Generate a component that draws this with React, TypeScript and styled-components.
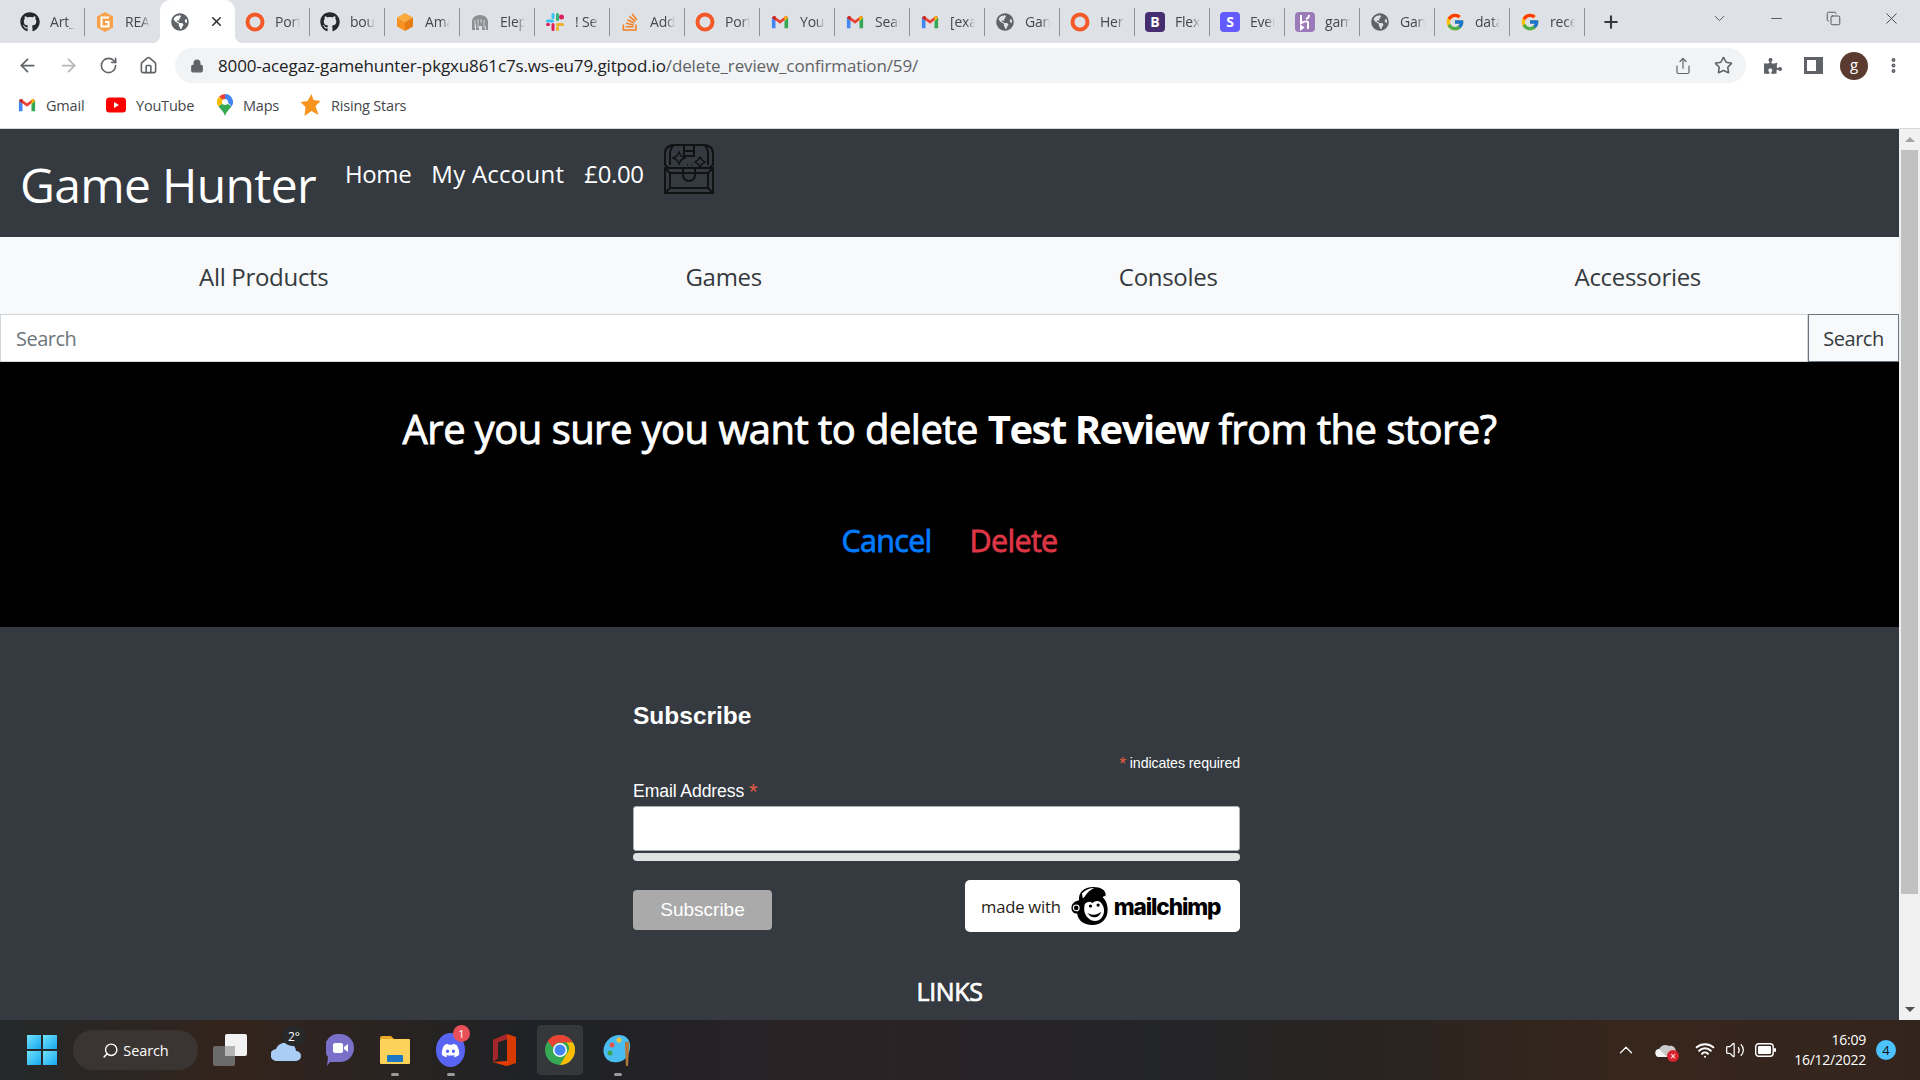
import React from "react";
import styled, { createGlobalStyle } from "styled-components";
import { FaGithub, FaGlobeAmericas, FaDiscord, FaStackOverflow, FaPuzzlePiece } from "react-icons/fa";
import { FcGoogle } from "react-icons/fc";
import { ArrowLeft, ArrowRight, RotateCw, Home, Lock, Star, Share, ChevronDown, Minus, X, Plus, Copy, MoreVertical, ChevronUp, Search as SearchIcon, Wifi, Volume2 } from "lucide-react";

const sans = `"Open Sans", "Noto Sans", "Liberation Sans", sans-serif`;

const Global = createGlobalStyle`
  html, body { margin: 0; padding: 0; width: 1920px; height: 1080px; overflow: hidden; background: #fff; }
  #root { width: 1920px; height: 1080px; }
  * { box-sizing: border-box; }
`;

const Screen = styled.div`
  width: 1920px; height: 1080px; display: flex; flex-direction: column; overflow: hidden; font-family: ${sans};
`;

/* ---------- browser chrome ---------- */
const TabStrip = styled.div`
  height: 43px; flex: none; background: #dee1e6; display: flex; align-items: center; padding-left: 10px; color: #3c4043;
`;
const Tab = styled.div<{ $active?: boolean; $noSep?: boolean }>`
  width: 75px; height: ${p => (p.$active ? "43px" : "28px")}; display: flex; align-items: center; gap: 10px; padding-left: 10px; flex: none; position: relative;
  background: ${p => (p.$active ? "#fff" : "transparent")};
  border-radius: ${p => (p.$active ? "10px 10px 0 0" : "0")};
  border-right: ${p => (p.$active || p.$noSep ? "0" : "1px solid #8f9196")};
  ${p => p.$active && `
    &::before, &::after { content: ""; position: absolute; bottom: 0; width: 8px; height: 8px; }
    &::before { left: -8px; background: radial-gradient(circle at 0 0, transparent 8px, #fff 8.5px); }
    &::after { right: -8px; background: radial-gradient(circle at 100% 0, transparent 8px, #fff 8.5px); }
  `}
`;
const TabIcon = styled.span`
  width: 20px; height: 20px; flex: none; display: flex; align-items: center; justify-content: center;
`;
const TabLabel = styled.span`
  width: 25px; overflow: hidden; white-space: nowrap; font-size: 14px; letter-spacing: -0.2px; color: #45474a;
  mask-image: linear-gradient(90deg, #000 65%, transparent);
  -webkit-mask-image: linear-gradient(90deg, #000 65%, transparent);
`;
const CloseMark = styled.span`
  margin-left: 9px; display: flex; color: #303236;
`;
const NewTab = styled.span`
  margin-left: 16px; display: flex; color: #36393d;
`;
const WindowControls = styled.div`
  margin-left: auto; display: flex; align-items: center; color: #45474a; padding-bottom: 6px;
`;
const WinButton = styled.span<{ $w: number }>`
  width: ${p => p.$w}px; display: flex; justify-content: center;
`;
const Toolbar = styled.div`
  height: 43px; flex: none; background: #fff; display: flex; align-items: center; padding: 2px 0 0 17px; color: #5f6368;
`;
const NavIcon = styled.span<{ $w: number; $dim?: boolean }>`
  width: ${p => p.$w}px; flex: none; display: flex; color: ${p => (p.$dim ? "#b5b7ba" : "#5f6368")};
`;
const Omnibox = styled.div`
  width: 1571px; height: 35px; border-radius: 18px; background: #f1f3f4; display: flex; align-items: center; padding: 0 13px 0 15px; flex: none;
`;
const Url = styled.span`
  margin-left: 14px; font-size: 17px; letter-spacing: -0.13px; color: #202124; white-space: nowrap;
`;
const UrlPath = styled.span`
  color: #5f6368;
`;
const OmniEnd = styled.span`
  margin-left: auto; display: flex; gap: 22px; align-items: center; color: #5f6368;
`;
const ToolbarRight = styled.div`
  display: flex; align-items: center; margin-left: 18px; gap: 19px; color: #5f6368;
`;
const PanelIcon = styled.span`
  width: 19px; height: 17px; margin: 0 -2px 0 3px; border: 3px solid #5f6368; border-right-width: 7px; display: block;
`;
const Avatar = styled.span`
  width: 28px; height: 28px; margin-right: -3px; border-radius: 50%; background: #5b3a30; color: #fff; font-size: 15px; display: flex; align-items: center; justify-content: center; line-height: 1; padding-bottom: 3px;
`;
const Bookmarks = styled.div`
  height: 43px; flex: none; background: #fff; display: flex; align-items: center; padding: 0 0 4px 18px; font-size: 14.5px; letter-spacing: -0.2px; color: #45474a; border-bottom: 1px solid #d5d7da;
`;
const Bookmark = styled.span<{ $w: number }>`
  width: ${p => p.$w}px; flex: none; display: flex; align-items: center; gap: 10px;
`;

/* ---------- page ---------- */
const Viewport = styled.div`
  flex: 1; min-height: 0; display: flex;
`;
const Page = styled.div`
  flex: 1; min-width: 0; overflow: hidden; display: flex; flex-direction: column;
`;
const Scrollbar = styled.div`
  width: 21px; flex: none; background: #f1f1f1; display: flex; flex-direction: column; align-items: center; padding: 0 2px;
`;
const ScrollArrow = styled.div<{ $down?: boolean }>`
  height: 21px; flex: none; display: flex; align-items: center; justify-content: center;
  &::before { content: ""; width: 0; height: 0; border-left: 5px solid transparent; border-right: 5px solid transparent;
    ${p => (p.$down ? "border-top: 5px solid #505050;" : "border-bottom: 5px solid #a3a3a3;")} }
`;
const ScrollThumb = styled.div`
  width: 17px; height: 744px; background: #c1c1c1; flex: none;
`;
const ScrollGap = styled.div`
  flex: 1;
`;
const Header = styled.header`
  height: 108px; flex: none; background: #343a40; display: flex; align-items: flex-start; padding-left: 20px; color: #fff;
`;
const Brand = styled.h1`
  margin: 21px 0 0; font-size: 48px; font-weight: 400; line-height: 70px; letter-spacing: -0.68px; white-space: nowrap;
`;
const HeaderLinks = styled.nav`
  display: flex; margin-left: 29px; gap: 20px; font-size: 24px; letter-spacing: -0.35px; line-height: 36px; margin-top: 27px;
`;
const HeaderLink = styled.span<{ $wide?: boolean }>`
  letter-spacing: ${p => (p.$wide ? "0.25px" : "-0.35px")};
`;
const Chest = styled.svg`
  margin-left: 19px; margin-top: 15px; width: 52px; height: 50px; flex: none;
`;
const CategoryNav = styled.nav`
  height: 77px; flex: none; background: #f8f9fa; display: flex; justify-content: space-between; align-items: center; padding: 2px 198px 0 199px; font-size: 24px; letter-spacing: -0.3px; color: #343a40;
`;
const SearchRow = styled.form`
  height: 48px; flex: none; display: flex; margin: 0;
`;
const SearchInput = styled.input`
  flex: 1; min-width: 0; height: 48px; border: 1px solid #ced4da; background: #fff; padding: 0 15px; font: 400 20px ${sans}; letter-spacing: -0.5px;
  outline: 0; color: #495057;
  &::placeholder { color: #6c757d; opacity: 1; }
`;
const SearchButton = styled.button`
  width: 91px; height: 48px; border: 1px solid #6c757d; background: #f8f9fa; color: #343a40; font: 400 20px ${sans}; letter-spacing: -0.45px; padding: 0;
`;
const Confirm = styled.section`
  height: 265px; flex: none; background: #000; color: #fff; display: flex; flex-direction: column; align-items: center; padding-top: 38px;
`;
const ConfirmTitle = styled.h2`
  margin: 0; font-size: 40px; font-weight: 400; line-height: 58px; letter-spacing: -0.56px; white-space: nowrap; -webkit-text-stroke: 0.9px #fff;
  strong { -webkit-text-stroke: 0; font-weight: 700; letter-spacing: -1.5px; }
`;
const ConfirmActions = styled.div`
  display: flex; gap: 38px; margin-top: 58px; font-size: 30.5px; font-weight: 400; line-height: 48px; letter-spacing: -0.7px;
`;
const ActionLink = styled.a<{ $danger?: boolean }>`
  color: ${p => (p.$danger ? "#dc3545" : "#007bff")}; text-decoration: none; -webkit-text-stroke: 0.8px ${p => (p.$danger ? "#dc3545" : "#007bff")};
`;
const Footer = styled.footer`
  flex: 1; background: #343a40; color: #fff; display: flex; flex-direction: column; align-items: center;
`;
const Signup = styled.div`
  width: 607px; margin: 71px 26px 0 0; display: flex; flex-direction: column; font-family: "Liberation Sans", Arial, sans-serif;
`;
const SignupTitle = styled.h2`
  margin: 0; font-size: 24.5px; font-weight: 700; line-height: 36px;
`;
const Required = styled.div`
  margin-top: 20px; text-align: right; font-size: 14.2px; line-height: 18px; letter-spacing: -0.1px;
`;
const Star2 = styled.span`
  color: #e85c41; font-size: 1.25em; line-height: 0; vertical-align: -2px;
`;
const FieldLabel = styled.label`
  margin-top: 5px; font-size: 17.6px; line-height: 29px; letter-spacing: -0.1px; display: block;
`;
const EmailInput = styled.input`
  display: block; width: 100%; height: 45px; background: #fff; border: 1px solid #abb0b2; border-radius: 3px; outline: 0;
`;
const Meter = styled.div`
  height: 8px; margin-top: 2px; background: #dfe1e2; border-radius: 4px;
`;
const SignupBottom = styled.div`
  display: flex; justify-content: space-between; align-items: flex-start; margin-top: 19px;
`;
const SubscribeButton = styled.button`
  width: 139px; height: 40px; margin-top: 10px; background: #aaa; border: 0; border-radius: 4px; color: #fff; font: 400 19px "Liberation Sans", Arial, sans-serif; padding: 0;
`;
const MadeWith = styled.div`
  width: 275px; height: 52px; background: #fff; border-radius: 5px; display: flex; align-items: center; padding-left: 16px; color: #241c15;
`;
const MadeText = styled.span`
  font: 400 16.6px ${sans}; letter-spacing: -0.2px; white-space: nowrap;
`;
const ChimpMark = styled.svg`
  width: 39px; height: 40px; margin-left: 10px; flex: none;
`;
const ChimpWord = styled.span`
  font: 800 22.6px "Inter", ${sans}; letter-spacing: -1.1px; margin-left: 4px; color: #000;
`;
const LinksTitle = styled.h3`
  margin: 41px 0 0; font-size: 25px; font-weight: 400; line-height: 36px; letter-spacing: -0.4px; -webkit-text-stroke: 0.7px #fff;
`;

/* ---------- taskbar ---------- */
const Taskbar = styled.div`
  height: 60px; flex: none; display: flex; align-items: center; color: #fff; padding-left: 27px;
  background: linear-gradient(90deg, #24282a 0%, #33241c 12%, #1f2226 28%, #2b2225 45%, #232428 60%, #2a2420 72%, #37261c 85%, #33251e 100%);
`;
const TaskSlot = styled.span<{ $w: number; $ml?: number }>`
  width: ${p => p.$w}px; height: 36px; flex: none; margin-left: ${p => p.$ml ?? 0}px; display: flex; align-items: center; justify-content: center; position: relative;
`;
const WinLogo = styled.span`
  width: 30px; height: 30px; display: grid; grid-template-columns: 1fr 1fr; grid-template-rows: 1fr 1fr; gap: 2px; flex: none;
`;
const WinPane = styled.span`
  background: linear-gradient(135deg, #6fe3fb, #18a6ee);
`;
const SearchPill = styled.div`
  width: 125px; height: 40px; margin-left: 16px; border-radius: 20px; background: #3a3532; display: flex; align-items: center; justify-content: center; gap: 4px; font-size: 14.5px; letter-spacing: -0.1px; flex: none;
`;
const PillGlass = styled(SearchIcon)`
  transform: scaleX(-1);
`;
const Pin = styled.span<{ $on?: boolean }>`
  position: absolute; bottom: -8px; left: 50%; transform: translateX(-50%); width: ${p => (p.$on ? "20px" : "8px")}; height: 3px; border-radius: 2px; background: ${p => (p.$on ? "#4cc2ff" : "#9a9a9a")};
`;
const ChromeBox = styled.span`
  width: 46px; height: 50px; flex: none; margin-left: 21px; border-radius: 4px; background: #35373a; display: flex; align-items: center; justify-content: center; position: relative;
`;
const Badge = styled.span`
  position: absolute; top: -7px; right: -5px; width: 17px; height: 17px; border-radius: 50%; background: #e8505a; color: #fff; font-size: 11px; display: flex; align-items: center; justify-content: center;
`;
const WeatherTemp = styled.span`
  position: absolute; top: -6px; right: -5px; width: 24px; height: 20px; border-radius: 10px; background: #26282a; color: #fff; font-size: 12px; display: flex; align-items: center; justify-content: center;
`;
const Tray = styled.div`
  margin-left: auto; display: flex; align-items: center; color: #fff;
`;
const TraySlot = styled.span<{ $w: number; $ml?: number }>`
  width: ${p => p.$w}px; margin-left: ${p => p.$ml ?? 0}px; flex: none; display: flex; justify-content: center; position: relative;
`;
const TrayError = styled.span`
  position: absolute; right: 2px; bottom: -4px; width: 12px; height: 12px; background: #d9232e; border-radius: 50%; color: #fff; font-size: 10px; line-height: 12px; text-align: center;
`;
const Clock = styled.div`
  width: 80px; margin-left: 6px; text-align: right; font-size: 14px; line-height: 20px; letter-spacing: -0.25px; white-space: nowrap;
`;
const Notify = styled.span`
  width: 20px; height: 20px; border-radius: 50%; background: #4cc2ff; color: #111; font-size: 13px; display: flex; align-items: center; justify-content: center; margin: 0 24px 0 10px;
`;

/* ---------- drawings ---------- */
const Opera = () => (
  <svg width="20" height="20" viewBox="0 0 20 20"><circle cx="10" cy="10" r="7.500" fill="none" stroke="#f4592a" strokeWidth="4" /></svg>
);
const Gmail = ({ s = 18 }: { s?: number }) => (
  <svg width={s} height={s} viewBox="0 0 20 20">
    <path d="M1 5v12h4V9z" fill="#4285f4" /><path d="M19 5v12h-4V9z" fill="#34a853" />
    <path d="M1 5l9 7 9-7-2-2-7 5-7-5z" fill="#ea4335" /><path d="M1 5l4 4V3z" fill="#c5221f" /><path d="M19 5l-4 4V3z" fill="#fbbc04" />
  </svg>
);
const OrangeG = () => (
  <svg width="20" height="22" viewBox="0 0 20 22"><path d="M10 1l8 4.500v11L10 21l-8-4.500v-11z" fill="#f7a14b" /><path d="M14 6.500H6.500v9H13.500V11h-3.500" fill="none" stroke="#fff" strokeWidth="2" /></svg>
);
const Box = () => (
  <svg width="20" height="20" viewBox="0 0 20 20"><path d="M10 1l8 4.500L10 10 2 5.500z" fill="#fbab3c" /><path d="M2 5.500L10 10v9l-8-4.500z" fill="#f69122" /><path d="M18 5.500L10 10v9l8-4.500z" fill="#e57c12" /></svg>
);
const Elephant = () => (
  <svg width="20" height="20" viewBox="0 0 20 20"><path d="M2 18V10c0-4 3-7 8-7s8 3 8 7v8h-2v-4l-1 1v3h-3v-4H9v4H6v-5l-1-1v6z" fill="#8d9093" /><path d="M5 8v8M8 7v9M11 7v4M14 8v8" stroke="#dee1e6" strokeWidth=".8" /></svg>
);
const Slack = () => (
  <svg width="20" height="20" viewBox="0 0 20 20">
    <rect x="1" y="7.500" width="8" height="3" rx="1.500" fill="#36c5f0" /><rect x="6.500" y="1" width="3" height="6" rx="1.500" fill="#36c5f0" />
    <rect x="11" y="1" width="3" height="8" rx="1.500" fill="#2eb67d" /><circle cx="16.500" cy="5" r="2.500" fill="#e01e5a" />
    <rect x="11" y="11" width="8" height="3" rx="1.500" fill="#ecb22e" /><rect x="11" y="14" width="3" height="5" rx="1.500" fill="#ecb22e" />
    <rect x="6.500" y="11" width="3" height="8" rx="1.500" fill="#e01e5a" /><rect x="1" y="11" width="4" height="3" rx="1.500" fill="#e01e5a" />
  </svg>
);
const Square = ({ c, l }: { c: string; l: string }) => (
  <svg width="20" height="20" viewBox="0 0 20 20"><rect x="0" y="0" width="20" height="20" rx="4" fill={c} /><text x="10" y="15" textAnchor="middle" fontSize="14" fontWeight="700" fill="#fff" fontFamily="Open Sans">{l}</text></svg>
);
const Heroku = () => (
  <svg width="20" height="20" viewBox="0 0 20 20"><rect width="20" height="20" rx="4" fill="#9a7ab8" /><path d="M6 3v8c3-1.500 6-2 7-1v7M14 3c0 2-1 3.500-3 4M6 14l2 1.500L6 17z" fill="none" stroke="#fff" strokeWidth="2" /></svg>
);
const Youtube = () => (
  <svg width="20" height="16" viewBox="0 0 20 16"><rect width="20" height="15" y=".5" rx="3.500" fill="#f00" /><path d="M8 5l5 3-5 3z" fill="#fff" /></svg>
);
const MapPin = () => (
  <svg width="16" height="22" viewBox="0 0 16 22">
    <path d="M8 0a8 8 0 0 1 6.500 12.600L8 5z" fill="#4285f4" /><path d="M8 0a8 8 0 0 0-6 2.700L8 8z" fill="#ea4335" />
    <path d="M2 2.700A8 8 0 0 0 1.500 12.600L8 8z" fill="#fbbc04" /><path d="M1.500 12.600C4 16 7 18 8 22c1-4 4-6 6.500-9.400L8 8z" fill="#34a853" /><circle cx="8" cy="8" r="3" fill="#fff" />
  </svg>
);
const RisingStar = () => (
  <svg width="21" height="22" viewBox="0 0 20 22"><path d="M11 0l2 6 7 1-5 5 3 9-7-4-7 5 1-9-5-5 7-1z" fill="#f7941d" /></svg>
);
const ChestDrawing = () => (
  <Chest viewBox="0 0 52 50" fill="none" stroke="#101214" strokeWidth="2">
    <path d="M2 21V9c0-5 4-8 9-8h30c5 0 9 3 9 8v12l-4 3H6z" />
    <path d="M11 1c-3 2-4 5-4 9v11M41 1c3 2 4 5 4 9v11M21 1v11h10V1M21 7h10" />
    <path d="M2 24h48v25H2zM7 29h38v15H7zM2 24l5 5M50 24l-5 5M2 49l5-5M50 49l-5-5" />
    <path d="M20 24v7a6 6 0 0 0 12 0v-7" />
    <path d="M16 8l2 4 4 2-4 2-2 4-2-4-4-2 4-2zM37 13l2 3 3 2-3 2-2 3-2-3-3-2 3-2z" strokeWidth="1.500" />
    <path d="M24 21h1M28 21h1" strokeWidth="1.500" />
  </Chest>
);
const ChimpLogo = () => (
  <ChimpMark viewBox="0 0 40 42">
    <path d="M8 15C7 7 13 1 23 1c8 0 13 3 13 9-2 1-3 1-3 2 3 3 5 7 5 13 0 10-7 16-16 16C12 41 7 36 6 29c-4 0-6-3-6-6 0-4 3-7 8-8z" fill="#000" />
    <path d="M11 8c3-4 8-6 13-6-4 2-8 5-10 9l-2 2z" fill="#fff" />
    <path d="M14 19c3-3 6-3 8-1 3-3 8-3 10 1 3 4 3 10 0 14-3 4-9 5-13 2-4-3-7-8-5-16z" fill="#fff" />
    <circle cx="20" cy="21" r="1.700" /><circle cx="28" cy="20" r="1.700" />
    <path d="M17 28c4 3 10 3 14-1-1 7-11 8-14 1z" fill="#000" /><circle cx="5" cy="23" r="3" fill="none" stroke="#fff" strokeWidth="1.200" />
  </ChimpMark>
);
const Squares = () => (
  <svg width="34" height="32" viewBox="0 0 34 32"><rect x="0" y="12" width="22" height="20" rx="2" fill="#6b6b6b" /><rect x="12" y="0" width="22" height="22" rx="2" fill="#f2f2f2" /><rect x="12" y="12" width="10" height="10" fill="#b5b5b5" /></svg>
);
const Cloud = () => (
  <svg width="30" height="22" viewBox="0 0 30 22"><path d="M6 22a6 6 0 0 1-1-12 9 9 0 0 1 13-5 7 7 0 0 1 7 7 5 5 0 0 1 0 10z" fill="#aacdf5" /></svg>
);
const TrayCloud = () => (
  <svg width="22" height="16" viewBox="0 0 22 16"><path d="M5 15a4 4 0 0 1-1-8 7 7 0 0 1 10-3c4-1 7 2 7 6a5 5 0 0 1-3 5z" fill="#c9c9c9" /><path d="M5 15a4 4 0 0 1-1-8l8 8z" fill="#f5f5f5" /></svg>
);
const Teams = () => (
  <svg width="28" height="32" viewBox="0 0 28 32"><path d="M14 0a14 14 0 0 1 0 28H4l-3 4 1-9A14 14 0 0 1 14 0z" fill="#7b70c9" /><rect x="7" y="9" width="10" height="10" rx="2" fill="#fff" /><path d="M18 13l4-3v8l-4-3z" fill="#fff" /></svg>
);
const Folder = () => (
  <svg width="30" height="28" viewBox="0 0 30 28"><path d="M0 2a2 2 0 0 1 2-2h9l3 3H0z" fill="#e8a92b" /><rect y="3" width="30" height="25" rx="1" fill="#fcd25a" /><rect x="7" y="19" width="16" height="7" rx="1" fill="#1c78c4" /></svg>
);
const Discord = () => (
  <svg width="29" height="34" viewBox="0 0 29 34"><ellipse cx="14.500" cy="17" rx="14.500" ry="17" fill="#5865f2" /><foreignObject x="5" y="8" width="19" height="18"><FaDiscord color="#fff" size={19} /></foreignObject></svg>
);
const Office = () => (
  <svg width="23" height="32" viewBox="0 0 23 32"><path d="M14 0l9 3v26l-9 3-14-4 14 1V5L5 8v16l-5 4V6z" fill="#d83b01" /><path d="M0 6l14-6v5L5 8v16l-5 4z" fill="#a4262c" /><path d="M14 27v5l-14-4z" fill="#eb3c00" /></svg>
);
const Chrome = () => (
  <svg width="30" height="30" viewBox="0 0 30 30">
    <circle cx="15" cy="15" r="15" fill="#34a853" /><path d="M15 0a15 15 0 0 1 13 7.500H15a7.500 7.500 0 0 0-7 5L2.500 6A15 15 0 0 1 15 0z" fill="#ea4335" />
    <path d="M28 7.500A15 15 0 0 1 15 30l6.500-11a7.500 7.500 0 0 0 0-11.500z" fill="#fbbc04" /><circle cx="15" cy="15" r="7" fill="#fff" /><circle cx="15" cy="15" r="5.500" fill="#4285f4" />
  </svg>
);
const Palette = () => (
  <svg width="29" height="32" viewBox="0 0 29 32"><path d="M16 1c8 0 12 6 11 13-1 9-8 16-17 14C3 27-1 20 1 13 3 6 9 1 16 1z" fill="#49bdf0" /><circle cx="9" cy="11" r="2.500" fill="#e2574c" /><circle cx="16" cy="6" r="2.500" fill="#f5c33b" /><circle cx="7" cy="19" r="2.500" fill="#3fa34d" /><path d="M22 8h4v6l-1 18h-2l-1-18z" fill="#b4793c" /></svg>
);
const Battery = () => (
  <svg width="21" height="14" viewBox="0 0 21 14"><rect x=".7" y=".7" width="17.500" height="12.600" rx="3" fill="none" stroke="#fff" strokeWidth="1.400" /><rect x="3" y="3" width="13" height="8" rx="1" fill="#fff" /><rect x="19" y="5" width="2" height="4" rx="1" fill="#fff" /></svg>
);

const tabs: { icon: React.ReactNode; label: string; active?: boolean; noSep?: boolean }[] = [
  { icon: <FaGithub size={20} color="#24292e" />, label: "Art_" },
  { icon: <OrangeG />, label: "REA", noSep: true },
  { icon: <FaGlobeAmericas size={18} color="#5f6368" />, label: "G", active: true },
  { icon: <Opera />, label: "Port" },
  { icon: <FaGithub size={20} color="#24292e" />, label: "bou" },
  { icon: <Box />, label: "Ama" },
  { icon: <Elephant />, label: "Elep" },
  { icon: <Slack />, label: "! Se" },
  { icon: <FaStackOverflow size={20} color="#f48024" />, label: "Add" },
  { icon: <Opera />, label: "Port" },
  { icon: <Gmail />, label: "You" },
  { icon: <Gmail />, label: "Sear" },
  { icon: <Gmail />, label: "[exa" },
  { icon: <FaGlobeAmericas size={18} color="#5f6368" />, label: "Gan" },
  { icon: <Opera />, label: "Her" },
  { icon: <Square c="#452e6f" l="B" />, label: "Flex" },
  { icon: <Square c="#635bff" l="S" />, label: "Ever" },
  { icon: <Heroku />, label: "gam" },
  { icon: <FaGlobeAmericas size={18} color="#5f6368" />, label: "Gan" },
  { icon: <FcGoogle size={20} />, label: "data" },
  { icon: <FcGoogle size={20} />, label: "rece" },
];

export default function App() {
  return (
    <Screen>
      <Global />
      <TabStrip>
        {tabs.map((t, i) => (
          <Tab key={i} $active={t.active} $noSep={t.noSep}>
            <TabIcon>{t.icon}</TabIcon>
            {t.active ? (
              <CloseMark><X size={15} strokeWidth={2.5} /></CloseMark>
            ) : (
              <TabLabel>{t.label}</TabLabel>
            )}
          </Tab>
        ))}
        <NewTab><Plus size={20} strokeWidth={2.5} /></NewTab>
        <WindowControls>
          <WinButton $w={57}><ChevronDown size={17} strokeWidth={1.2} /></WinButton>
          <WinButton $w={57}><Minus size={17} strokeWidth={1.2} /></WinButton>
          <WinButton $w={57}><Copy size={15} strokeWidth={1.4} /></WinButton>
          <WinButton $w={58}><X size={19} strokeWidth={1.2} /></WinButton>
        </WindowControls>
      </TabStrip>
      <Toolbar>
        <NavIcon $w={41}><ArrowLeft size={21} /></NavIcon>
        <NavIcon $w={41} $dim><ArrowRight size={21} /></NavIcon>
        <NavIcon $w={40}><RotateCw size={19} /></NavIcon>
        <NavIcon $w={36}><Home size={19} /></NavIcon>
        <Omnibox>
          <Lock size={14} fill="#5f6368" color="#5f6368" />
          <Url>8000-acegaz-gamehunter-pkgxu861c7s.ws-eu79.gitpod.io<UrlPath>/delete_review_confirmation/59/</UrlPath></Url>
          <OmniEnd>
            <Share size={18} strokeWidth={1.6} />
            <Star size={19} strokeWidth={2} />
          </OmniEnd>
        </Omnibox>
        <ToolbarRight>
          <FaPuzzlePiece size={18} />
          <PanelIcon />
          <Avatar>g</Avatar>
          <MoreVertical size={19} strokeWidth={3} />
        </ToolbarRight>
      </Toolbar>
      <Bookmarks>
        <Bookmark $w={88}><Gmail />Gmail</Bookmark>
        <Bookmark $w={111}><Youtube />YouTube</Bookmark>
        <Bookmark $w={83}><MapPin />Maps</Bookmark>
        <Bookmark $w={120}><RisingStar />Rising Stars</Bookmark>
      </Bookmarks>
      <Viewport>
        <Page>
          <Header>
            <Brand>Game Hunter</Brand>
            <HeaderLinks>
              <HeaderLink>Home</HeaderLink>
              <HeaderLink $wide>My Account</HeaderLink>
              <HeaderLink>£0.00</HeaderLink>
            </HeaderLinks>
            <ChestDrawing />
          </Header>
          <CategoryNav>
            <span>All Products</span><span>Games</span><span>Consoles</span><span>Accessories</span>
          </CategoryNav>
          <SearchRow>
            <SearchInput placeholder="Search" />
            <SearchButton type="button">Search</SearchButton>
          </SearchRow>
          <Confirm>
            <ConfirmTitle>Are you sure you want to delete <strong>Test Review</strong> from the store?</ConfirmTitle>
            <ConfirmActions>
              <ActionLink>Cancel</ActionLink>
              <ActionLink $danger>Delete</ActionLink>
            </ConfirmActions>
          </Confirm>
          <Footer>
            <Signup>
              <SignupTitle>Subscribe</SignupTitle>
              <Required><Star2>*</Star2> indicates required</Required>
              <FieldLabel>Email Address <Star2>*</Star2></FieldLabel>
              <EmailInput type="email" />
              <Meter />
              <SignupBottom>
                <SubscribeButton type="button">Subscribe</SubscribeButton>
                <MadeWith>
                  <MadeText>made with</MadeText>
                  <ChimpLogo />
                  <ChimpWord>mailchimp</ChimpWord>
                </MadeWith>
              </SignupBottom>
            </Signup>
            <LinksTitle>LINKS</LinksTitle>
          </Footer>
        </Page>
        <Scrollbar>
          <ScrollArrow />
          <ScrollThumb />
          <ScrollGap />
          <ScrollArrow $down />
        </Scrollbar>
      </Viewport>
      <Taskbar>
        <WinLogo><WinPane /><WinPane /><WinPane /><WinPane /></WinLogo>
        <SearchPill><PillGlass size={17} />Search</SearchPill>
        <TaskSlot $w={34} $ml={15}><Squares /></TaskSlot>
        <TaskSlot $w={30} $ml={24}><Cloud /><WeatherTemp>2°</WeatherTemp></TaskSlot>
        <TaskSlot $w={28} $ml={25}><Teams /></TaskSlot>
        <TaskSlot $w={30} $ml={26}><Folder /><Pin /></TaskSlot>
        <TaskSlot $w={29} $ml={26}><Discord /><Badge>1</Badge><Pin /></TaskSlot>
        <TaskSlot $w={23} $ml={28}><Office /></TaskSlot>
        <ChromeBox><Chrome /><Pin $on /></ChromeBox>
        <TaskSlot $w={29} $ml={20}><Palette /><Pin /></TaskSlot>
        <Tray>
          <TraySlot $w={30}><ChevronUp size={22} strokeWidth={1.3} /></TraySlot>
          <TraySlot $w={30} $ml={10}><TrayCloud /><TrayError>×</TrayError></TraySlot>
          <TraySlot $w={30} $ml={9}><Wifi size={20} strokeWidth={2.4} /></TraySlot>
          <TraySlot $w={30}><Volume2 size={20} strokeWidth={1.5} /></TraySlot>
          <TraySlot $w={30}><Battery /></TraySlot>
          <Clock>16:09<br />16/12/2022</Clock>
          <Notify>4</Notify>
        </Tray>
      </Taskbar>
    </Screen>
  );
}
